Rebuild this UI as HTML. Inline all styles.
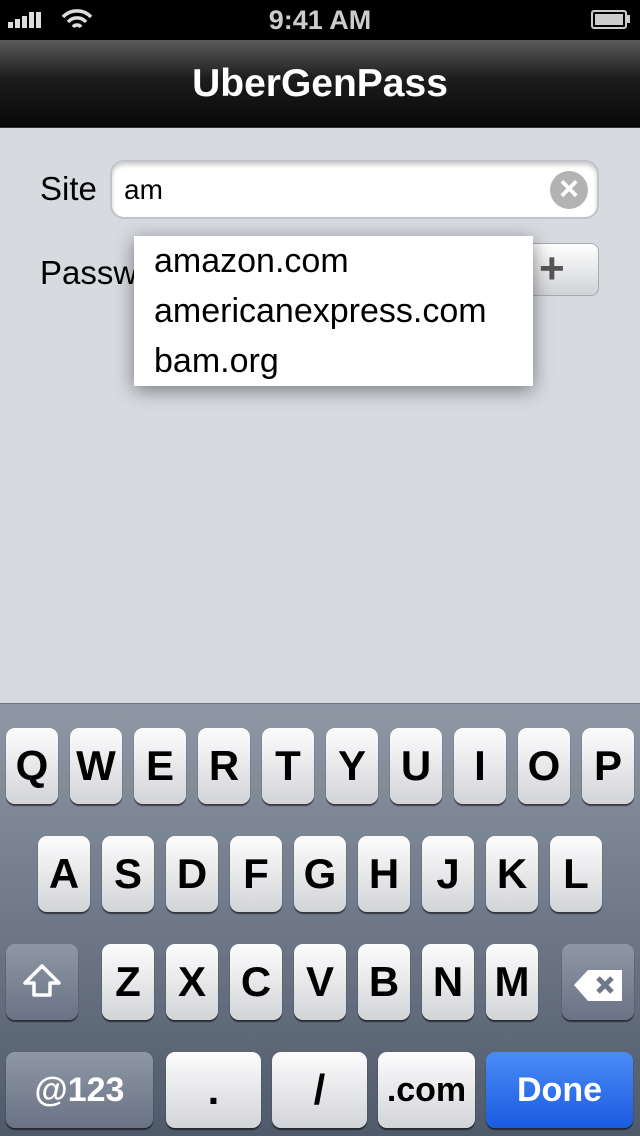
<!DOCTYPE html>
<html><head><style>
*{margin:0;padding:0;box-sizing:border-box}
body{width:640px;height:1136px;position:relative;overflow:hidden;background:#d7dadf;font-family:"Liberation Sans",Arial,sans-serif}
.abs{position:absolute}
.key{position:absolute;width:52px;height:76px;border-radius:9px;background:linear-gradient(#fcfcfd,#d3d4d8);box-shadow:0 2px 1px rgba(0,0,0,.55);font-weight:bold;font-size:42px;text-align:center;line-height:76px;color:#000}
.dk{background:linear-gradient(#8e97a5,#6a7384);color:#fff}
</style></head><body>
<div class="abs" style="left:0;top:0;width:640px;height:40px;background:#000;color:#ccc;font-weight:bold;font-size:27px;text-align:center;line-height:40px">9:41 AM</div>
<div class="abs" style="left:8px;top:12px;width:40px;height:16px">
<div class="abs" style="left:0;top:10px;width:5px;height:6px;background:#ddd"></div>
<div class="abs" style="left:7px;top:7px;width:5px;height:9px;background:#ddd"></div>
<div class="abs" style="left:14px;top:4px;width:5px;height:12px;background:#ddd"></div>
<div class="abs" style="left:21px;top:0;width:5px;height:16px;background:#ddd"></div>
<div class="abs" style="left:28px;top:0;width:5px;height:16px;background:#ddd"></div>
</div>
<svg class="abs" style="left:60px;top:8px" width="34" height="24"><path d="M3 9a19 19 0 0 1 28 0M8 14a12 12 0 0 1 18 0M13 19a5 5 0 0 1 8 0" stroke="#ddd" stroke-width="3.5" fill="none"/></svg>
<div class="abs" style="left:591px;top:10px;width:36px;height:19px;border:2px solid #ccc;border-radius:3px;padding:2px"><div style="width:100%;height:100%;background:#ccc"></div></div>
<div class="abs" style="left:627px;top:15px;width:3px;height:8px;background:#ccc"></div>
<div class="abs" style="left:0;top:40px;width:640px;height:88px;background:linear-gradient(#5a5a5a,#1c1c1c 45%,#080808);border-bottom:1px solid #333;color:#fff;font-weight:bold;font-size:39px;text-align:center;line-height:88px">UberGenPass</div>
<div class="abs" style="left:40px;top:170px;font-size:33px;color:#000">Site</div>
<div class="abs" style="left:110px;top:160px;width:489px;height:59px;border-radius:14px;background:#fff;border:2px solid #c0c3c8;box-shadow:inset 0 3px 4px rgba(0,0,0,.2);font-size:28px;line-height:56px;padding-left:12px">am</div>
<div class="abs" style="left:550px;top:171px;width:38px;height:38px;border-radius:50%;background:#b3b3b3;color:#fff;font-size:34px;line-height:36px;text-align:center;font-weight:bold">×</div>
<div class="abs" style="left:40px;top:254px;font-size:33px;color:#000">Password</div>
<div class="abs" style="left:500px;top:243px;width:99px;height:53px;border-radius:8px;background:linear-gradient(#fff,#d0d2d6);border:1px solid #a8abb0;font-size:44px;font-weight:bold;color:#555;line-height:50px;padding-left:38px">+</div>
<div class="abs" style="left:134px;top:236px;width:399px;height:150px;background:#fff;box-shadow:0 4px 18px rgba(0,0,0,.45);font-size:34px;color:#000;padding-left:20px;line-height:50px">amazon.com<br>americanexpress.com<br>bam.org</div>
<div class="abs" style="left:0;top:703px;width:640px;height:433px;background:linear-gradient(#8f97a4,#4f5a6a);border-top:1px solid #6b7280"></div>
<div class="key" style="left:6px;top:728px">Q</div><div class="key" style="left:70px;top:728px">W</div><div class="key" style="left:134px;top:728px">E</div><div class="key" style="left:198px;top:728px">R</div><div class="key" style="left:262px;top:728px">T</div><div class="key" style="left:326px;top:728px">Y</div><div class="key" style="left:390px;top:728px">U</div><div class="key" style="left:454px;top:728px">I</div><div class="key" style="left:518px;top:728px">O</div><div class="key" style="left:582px;top:728px">P</div>
<div class="key" style="left:38px;top:836px">A</div><div class="key" style="left:102px;top:836px">S</div><div class="key" style="left:166px;top:836px">D</div><div class="key" style="left:230px;top:836px">F</div><div class="key" style="left:294px;top:836px">G</div><div class="key" style="left:358px;top:836px">H</div><div class="key" style="left:422px;top:836px">J</div><div class="key" style="left:486px;top:836px">K</div><div class="key" style="left:550px;top:836px">L</div>
<div class="key dk" style="left:6px;top:944px;width:72px"><svg width="44" height="40" style="margin-top:18px"><path d="M22 4L5 21h9v12h16V21h9z" fill="none" stroke="#fff" stroke-width="3.5" stroke-linejoin="round"/></svg></div>
<div class="key" style="left:102px;top:944px">Z</div><div class="key" style="left:166px;top:944px">X</div><div class="key" style="left:230px;top:944px">C</div><div class="key" style="left:294px;top:944px">V</div><div class="key" style="left:358px;top:944px">B</div><div class="key" style="left:422px;top:944px">N</div><div class="key" style="left:486px;top:944px">M</div>
<div class="key dk" style="left:562px;top:944px;width:72px"><svg width="52" height="40" style="margin-top:22px"><path d="M2 19L16 4h34v31H16z" fill="#fff"/><path d="M26 12l14 14M40 12L26 26" stroke="#6f7888" stroke-width="5"/></svg></div>
<div class="key dk" style="left:6px;top:1052px;width:147px;font-size:34px">@123</div>
<div class="key" style="left:166px;top:1052px;width:95px">.</div>
<div class="key" style="left:272px;top:1052px;width:95px">/</div>
<div class="key" style="left:378px;top:1052px;width:97px;font-size:34px">.com</div>
<div class="key" style="left:486px;top:1052px;width:147px;font-size:34px;color:#fff;background:linear-gradient(#4a8cf6,#1b5be0)">Done</div>
</body></html>
